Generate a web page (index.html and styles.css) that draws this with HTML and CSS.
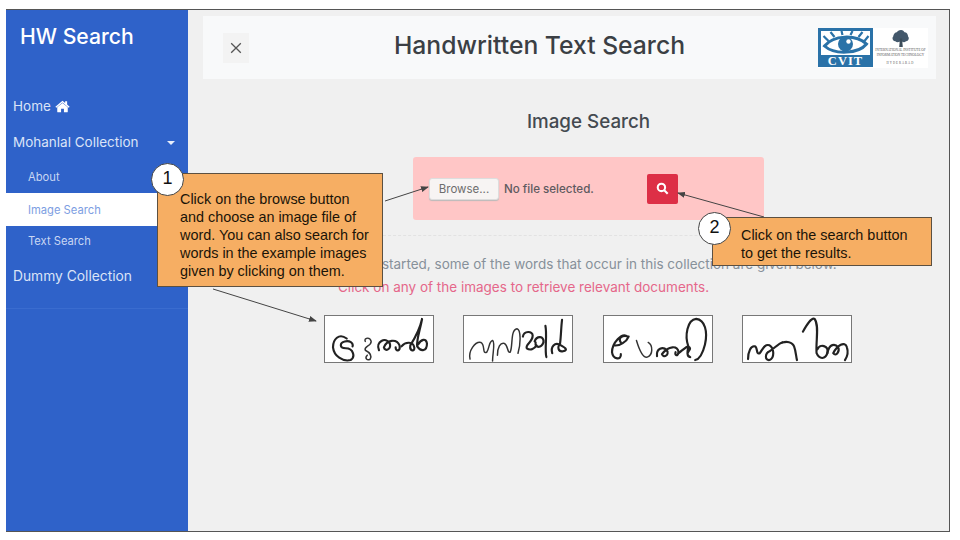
FILE: index.html
```html
<!DOCTYPE html>
<html lang="en">
<head>
<meta charset="utf-8">
<title>Handwritten Text Search</title>
<link rel="stylesheet" href="styles.css">
</head>
<body>
<div class="frame">
  <aside class="sidebar">
    <div class="brand">HW Search</div>
    <nav class="menu">
      <a class="item">Home
        <svg class="home" viewBox="0 0 24 20"><path d="M12 4.2 3.6 11.2V18.4c0 .5.4.9.9.9h5.2v-5.6h4.6v5.6h5.2c.5 0 .9-.4.9-.9V11.2z"/><path d="M12 .8 0.6 10.2l1.4 1.7L12 3.6l10 8.3 1.4-1.7-4-3.3V1.6h-3.2v2.7z"/></svg>
      </a>
      <a class="item item-toggle">Mohanlal Collection<span class="caret"></span></a>
      <a class="sub">About</a>
      <a class="sub sub-active">Image Search</a>
      <a class="sub sub-last">Text Search</a>
      <a class="item-last">Dummy Collection</a>
    </nav>
  </aside>
  <main class="content">
    <header class="topbar">
      <button class="close">
        <svg viewBox="0 0 12 12"><path d="M1.2 1.2 10.8 10.8M10.8 1.2 1.2 10.8"/></svg>
      </button>
      <h1 class="title">Handwritten Text Search</h1>
      <div class="logos">
        <div class="cvit">
          <svg class="eye" viewBox="0 0 48 24">
            <path class="eye-ray" d="M7 10 2 5M13 6 9 1M21 4 20 0M29 4 31 0M37 6 41 1M43 10 47 5"/>
            <path class="eye-lid" d="M3 15C12 4 34 3 45 13C37 23 13 24 3 15Z"/>
            <circle class="eye-ball" cx="24" cy="13" r="7.500"/>
            <circle class="eye-glint" cx="27" cy="10.500" r="2.200"/>
          </svg>
          <span class="cvit-name">CVIT</span>
        </div>
        <div class="iiit">
          <svg class="tree" viewBox="0 0 24 24">
            <path class="tree-top" d="M12 0c3 0 4 2 5 3 3 0 5 3 5 6 2 2 1 7-3 7-2 2-5 1-7 0-2 1-6 2-8 0-4 0-5-5-3-7 0-3 3-6 5-6 1-1 3-3 6-3z"/>
            <path class="tree-trunk" d="M10.500 12h3l1 12h-5z"/>
          </svg>
          <span class="iiit-line">INTERNATIONAL INSTITUTE OF</span>
          <span class="iiit-line">INFORMATION TECHNOLOGY</span>
          <span class="iiit-city">HYDERABAD</span>
        </div>
      </div>
    </header>

    <h2 class="heading">Image Search</h2>

    <form class="upload">
      <span class="browse">Browse...</span>
      <span class="nofile">No file selected.</span>
      <span class="go">
        <svg viewBox="0 0 12 12"><circle cx="5" cy="5" r="3.400"/><path d="M7.600 7.600 10.800 10.800"/></svg>
      </span>
    </form>

    <hr class="rule">

    <div class="intro">
      <p class="intro-gray">To get started, some of the words that occur in this collection are given below.</p>
      <p class="intro-red">Click on any of the images to retrieve relevant documents.</p>
    </div>

    <div class="words">
      <svg class="word" viewBox="0 0 110 47" role="img" aria-label="handwritten word">
        <path class="ink-heavy" d="M22 23C14 17 8 24 8 32C9 41 18 47 26 45C31 42 29 33 21 33C14 33 15 27 20 26C25 25 29 27 28 31"/>
        <path class="ink" d="M41 26C39 22 46 21 47 26C47 31 39 31 41 35C45 37 48 40 46 44C43 46 40 43 43 40"/>
        <path class="ink-heavy" d="M55 35C51 26 62 21 66 28C68 34 61 37 60 32C63 24 73 23 76 30C77 36 72 37 72 32"/>
        <path class="ink-heavy" d="M78 31C82 26 90 26 91 32C92 37 86 36 87 30C92 22 97 12 99 3C97 14 93 25 94 31C98 37 104 36 104 28C103 22 98 24 95 29"/>
      </svg>
      <svg class="word" viewBox="0 0 110 47" role="img" aria-label="handwritten word">
        <path class="ink" d="M6 44C4 36 11 26 17 27C22 30 18 39 23 37C26 33 25 26 29 25C32 27 29 38 29 46"/>
        <path class="ink" d="M34 40C34 32 37 27 41 28C45 30 44 38 47 37C50 31 47 14 54 13C58 14 58 28 55 38"/>
        <path class="ink-heavy" d="M60 21C61 15 70 15 70 20C70 27 62 29 64 33C68 36 72 33 74 30"/>
        <path class="ink-heavy" d="M72 26C74 20 82 20 81 27C79 33 72 33 73 27M83 10C85 20 82 34 84 42"/>
        <path class="ink-heavy" d="M90 38C88 31 93 27 97 29C103 32 107 35 101 36C96 37 95 32 98 28C99 20 99 12 100 4"/>
      </svg>
      <svg class="word" viewBox="0 0 110 47" role="img" aria-label="handwritten word">
        <path class="ink-heavy" d="M24 21C18 16 8 28 8 37C9 45 18 45 17 39M10 30C16 31 23 26 25 21C18 19 14 23 17 27"/>
        <path class="ink" d="M33 25C36 35 40 43 44 42C50 40 50 30 45 27"/>
        <path class="ink-heavy" d="M54 41C53 33 60 31 64 35C67 39 61 44 59 39C66 30 75 30 76 37C75 42 72 40 73 37"/>
        <path class="ink-heavy" d="M76 38C80 35 84 31 86 31C85 36 84 42 88 42C80 38 92 34 86 31C82 20 85 4 94 3C103 4 106 16 103 29C101 37 98 44 93 45"/>
      </svg>
      <svg class="word" viewBox="0 0 110 47" role="img" aria-label="handwritten word">
        <path class="ink-heavy" d="M5 44C5 36 8 30 12 31C15 32 13 40 17 38C20 34 22 28 27 30C32 33 32 43 27 45C22 46 22 38 27 36C32 33 36 28 40 27"/>
        <path class="ink-heavy" d="M40 27C44 26 50 26 52 31C54 36 54 42 55 45"/>
        <path class="ink-heavy" d="M61 16C65 9 70 1 73 3C78 10 74 26 75 38C78 45 84 44 86 38C88 30 78 28 76 34"/>
        <path class="ink-heavy" d="M86 38C88 28 94 28 97 32C99 36 95 42 92 38C96 30 104 25 106 32C108 38 106 42 104 45"/>
      </svg>
    </div>
  </main>

  <svg class="arrows" viewBox="0 0 960 540">
    <defs>
      <marker id="tip" markerWidth="8" markerHeight="6" refX="7" refY="3" orient="auto"><path class="arrow-tip" d="M0 0 8 3 0 6Z"/></marker>
    </defs>
    <path class="arrow" marker-end="url(#tip)" d="M385 201 428 187"/>
    <path class="arrow" marker-end="url(#tip)" d="M764 217 678 193"/>
    <path class="arrow" marker-end="url(#tip)" d="M213 289 316 321"/>
  </svg>

  <div class="note note-one">Click on the browse button and choose an image file of word. You can also search for words in the example images given by clicking on them.</div>
  <div class="badge badge-one">1</div>
  <div class="note note-two">Click on the search button to get the results.</div>
  <div class="badge badge-two">2</div>
</div>
</body>
</html>
```

FILE: styles.css
```css
* { box-sizing: border-box; }
html, body { margin: 0; height: 100%; background: #fff; }
body { padding: 9px 10px 8px 6px; font-family: Inter, "Noto Sans", sans-serif; }

.frame {
  position: relative;
  display: flex;
  height: 523px;
  border: 1px solid #555;
  border-left: 0;
  background: #f0f0f0;
}

/* sidebar */
.sidebar { width: 182px; flex: none; background: #2f62c9; color: #fff; }
.brand { padding: 12px 0 0 14px; height: 78px; font-size: 21.200px; font-weight: 500; line-height: 28px; }
.menu { display: flex; flex-direction: column; }
.item { display: flex; align-items: center; height: 36px; padding-left: 7px; font-size: 13.500px; color: #dbe4f7; }
.item-toggle { position: relative; }
.item-last { display: block; height: 53px; padding: 0 0 0 7px; line-height: 40px; border-bottom: 1px solid #3a6ccf; font-size: 13.800px; color: #dbe4f7; }
.home { width: 15px; height: 13px; margin-left: 4px; fill: #fff; }
.caret { position: absolute; left: 161px; top: 17px; border: 4px solid transparent; border-top-color: #e8eefb; border-bottom: 0; }
.sub { display: flex; align-items: center; height: 33px; padding-left: 22px; font-size: 11.200px; color: #c9d7f3; }
.sub-active { background: #fff; color: #7d9ee2; }
.sub-last { height: 30px; }

/* main */
.content { flex: 1; padding: 6px 13px 0 15px; display: flex; flex-direction: column; align-items: stretch; }
.topbar { display: flex; align-items: center; height: 63px; background: #f8f9fa; padding: 0 8px 0 20px; }
.close { flex: none; width: 26px; height: 30px; padding: 0; border: 0; background: #f3f3f3; display: flex; align-items: center; justify-content: center; }
.close svg { width: 12px; height: 12px; fill: none; stroke: #555; stroke-width: 1.300; }
.title { flex: 1; margin: 0 0 6px; padding-left: 12px; text-align: center; font-size: 24.700px; font-weight: 500; color: #3b3f44; }
.logos { flex: none; display: flex; height: 40px; width: 110px; background: #fff; }
.cvit { width: 55px; height: 39px; background: #2a72a8; padding: 3px 3px 0; display: flex; flex-direction: column; align-items: center; }
.eye { width: 49px; height: 24px; background: #fff; }
.eye-ray { stroke: #2a72a8; stroke-width: 2.200; fill: none; }
.eye-lid { fill: #fff; stroke: #2a72a8; stroke-width: 3; }
.eye-ball { fill: #2a72a8; }
.eye-glint { fill: #fff; }
.cvit-name { font: 700 12.500px/12px "Liberation Serif", serif; color: #fff; letter-spacing: 1px; }
.iiit { flex: 1; display: flex; flex-direction: column; align-items: center; padding-top: 2px; font-family: "Liberation Serif", serif; color: #555; }
.tree { width: 18px; height: 20px; margin-bottom: 1px; }
.tree-top { fill: #43586b; }
.tree-trunk { fill: #3c4c59; }
.iiit-line { font-size: 3.400px; line-height: 5px; white-space: nowrap; }
.iiit-city { font-size: 3px; line-height: 10px; letter-spacing: 1px; }

.heading { margin: 32px 0 0; padding-left: 38px; text-align: center; font-size: 18.800px; line-height: 22px; font-weight: 500; color: #444a50; }
.upload {
  display: flex; align-items: center;
  align-self: flex-start;
  width: 351px; height: 63px;
  margin: 24px 0 0 210px;
  padding-left: 16px;
  background: #ffc6c6;
  border-radius: 3px;
}
.browse { display: flex; align-items: center; justify-content: center; width: 70px; height: 22px; background: #f7f4f3; border: 1px solid #ddd; border-radius: 3px; font-size: 11.500px; color: #6d6d6d; box-shadow: 0 1px 1px #bbb; }
.nofile { margin-left: 5px; width: 143px; font-size: 11.600px; font-weight: 500; color: #5e5a5f; }
.go { display: flex; align-items: center; justify-content: center; width: 31px; height: 30px; background: #dd2f46; border-radius: 2px; }
.go svg { width: 13px; height: 13px; fill: none; stroke: #fff; stroke-width: 1.900; }
.rule { margin: 15px 0 0 175px; width: 420px; border: 0; border-top: 1px dashed #e2e2e2; }

.intro { margin: 17px 0 0 135px; font-size: 13.500px; line-height: 23px; }
.intro p { margin: 0; white-space: nowrap; }
.intro-gray { color: #87919a; }
.intro-red { color: #e5678a; }

.words { display: flex; gap: 29.300px; margin: 16px 0 0 121px; }
.word { width: 110px; height: 48px; flex: none; background: #fff; border: 1px solid #777; }
.ink { fill: none; stroke: #333; stroke-width: 1.500; stroke-linecap: round; stroke-linejoin: round; }
.ink-heavy { fill: none; stroke: #222; stroke-width: 2.200; stroke-linecap: round; stroke-linejoin: round; }

/* annotations over the page */
.arrows { position: absolute; left: -6px; top: -10px; width: 960px; height: 540px; pointer-events: none; }
.arrow { fill: none; stroke: #444; stroke-width: 1; }
.arrow-tip { fill: #444; }
.note {
  position: absolute;
  background: #f6ae63;
  border: 1px solid #5c5041;
  font-family: "Liberation Sans", Arial, sans-serif;
  font-size: 14.400px;
  line-height: 18px;
  color: #1b1408;
}
.note-one { left: 151px; top: 163px; width: 226px; height: 114px; padding: 16px 6px 0 22px; }
.note-two { left: 706px; top: 207px; width: 220px; height: 49px; padding: 8px 14px 0 28px; }
.badge {
  position: absolute;
  display: flex; align-items: center; justify-content: center;
  width: 33px; height: 33px;
  border: 1px solid #444;
  border-radius: 50%;
  background: #fff;
  font: 18px "Liberation Sans", Arial, sans-serif;
  color: #111;
  padding-bottom: 3px;
}
.badge-one { left: 145px; top: 153px; }
.badge-two { left: 692px; top: 202px; }
```
